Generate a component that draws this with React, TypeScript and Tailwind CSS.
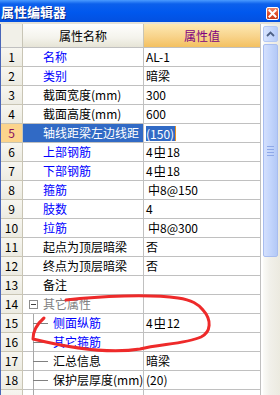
import React from "react";

type Row = {
  n: number;
  name: string;
  value?: React.ReactNode;
  blue?: boolean;
  tree?: boolean;
  group?: boolean;
  selected?: boolean;
  hideNum?: boolean;
};

const Rebar = () => (
  <span className="relative inline-block mx-[1px]">
    中
    <span className="absolute left-[1px] right-[1px] bottom-[3px] h-px bg-black" />
  </span>
);

const rows: Row[] = [
  { n: 1, name: "名称", value: "AL-1", blue: true },
  { n: 2, name: "类别", value: "暗梁", blue: true },
  { n: 3, name: "截面宽度(mm)", value: "300" },
  { n: 4, name: "截面高度(mm)", value: "600" },
  { n: 5, name: "轴线距梁左边线距", selected: true },
  { n: 6, name: "上部钢筋", value: <>4<Rebar />18</>, blue: true },
  { n: 7, name: "下部钢筋", value: <>4<Rebar />18</>, blue: true },
  { n: 8, name: "箍筋", value: <span className="pl-[2px]">中8@150</span>, blue: true },
  { n: 9, name: "肢数", value: "4", blue: true },
  { n: 10, name: "拉筋", value: <span className="pl-[2px]">中8@300</span>, blue: true },
  { n: 11, name: "起点为顶层暗梁", value: "否" },
  { n: 12, name: "终点为顶层暗梁", value: "否" },
  { n: 13, name: "备注", value: "" },
  { n: 14, name: "其它属性", group: true },
  { n: 15, name: "侧面纵筋", value: <>4<Rebar />12</>, blue: true, tree: true },
  { n: 16, name: "其它箍筋", value: "", blue: true, tree: true },
  { n: 17, name: "汇总信息", value: "暗梁", tree: true },
  { n: 18, name: "保护层厚度(mm)", value: "(20)", tree: true },
  { n: 19, name: "", value: "", tree: true, hideNum: true },
];

export default function App() {
  return (
    <div
      className="relative w-[280px] h-[395px] overflow-hidden bg-white flex flex-col text-[12px] text-black"
      style={{ fontFamily: '"Noto Sans CJK SC", "Noto Sans", sans-serif' }}
    >
      {/* title bar */}
      <div className="h-[22px] shrink-0 flex items-center justify-between bg-[linear-gradient(180deg,#4a9bff_0%,#0c60ec_18%,#0058ee_55%,#0350e0_100%)]">
        <span className="pl-[1px] text-white font-bold text-[13px] leading-none [text-shadow:1px_1px_0_#0a2a8a]">
          属性编辑器
        </span>
        <div className="mr-[1px] mt-[4px] w-[13px] h-[13px] rounded-[2px] border border-white bg-[linear-gradient(180deg,#f08a6a_0%,#e0502c_50%,#c83a1a_100%)] flex items-center justify-center">
          <svg width="9" height="9" viewBox="0 0 9 9">
            <path d="M1.5 1.5 L7.5 7.5 M7.5 1.5 L1.5 7.5" stroke="white" strokeWidth="2" strokeLinecap="square" />
          </svg>
        </div>
      </div>
      <div className="h-[2px] shrink-0 bg-[#e4e2d8]" />

      <div className="flex flex-1 min-h-0">
        {/* left frame line */}
        <div className="w-px bg-[#4a66b8] shrink-0" />

        {/* table */}
        <div className="w-[260px] shrink-0 flex flex-col border-r border-[#c0c0c0]">
          {/* header */}
          <div className="h-[24px] shrink-0 grid grid-cols-[22px_121px_116px] border-b border-[#c0c0c0]">
            <div className="bg-[#f1f0e8] border-r border-[#c8c5b6]" />
            <div className="flex items-center justify-center border-r border-[#c8c5b6] bg-[linear-gradient(180deg,#fefefd_0%,#f4f3ec_60%,#e6e4d6_100%)]">
              属性名称
            </div>
            <div className="flex items-center justify-center text-[#800080] bg-[linear-gradient(180deg,#fde9b4_0%,#f8d38a_55%,#f3c060_100%)]">
              属性值
            </div>
          </div>

          {rows.map((r) => (
            <div key={r.n} className="h-[19px] shrink-0 grid grid-cols-[22px_121px_116px]">
              <div
                className={
                  "flex items-center justify-center border-b border-r border-[#c9c5b4] " +
                  (r.selected
                    ? "bg-[#fcd48c] text-[#8a1060]"
                    : "bg-[linear-gradient(180deg,#f7f6f0_0%,#ecebe2_100%)]")
                }
              >
                {r.hideNum ? "" : r.n}
              </div>
              <div
                className={
                  "relative flex items-center border-b border-r border-[#c0c0c0] whitespace-nowrap " +
                  (r.selected ? "bg-[#316ac5] text-white pl-[20px]" : "pl-[20px]") +
                  (r.blue ? " text-[#0000ff]" : "") +
                  (r.group ? " text-[#808080]" : "")
                }
              >
                {r.group && (
                  <span className="absolute left-[6px] top-[5px] w-[9px] h-[9px] border border-[#8c8c8c] bg-white flex items-center justify-center">
                    <span className="w-[5px] h-px bg-[#404040]" />
                  </span>
                )}
                {r.tree && (
                  <>
                    <span className="absolute left-[10px] top-0 bottom-[-1px] w-px bg-[#a8a8a8]" />
                    <span className="absolute left-[10px] top-[9px] w-[15px] h-px bg-[#808080]" />
                  </>
                )}
                <span className={r.tree ? "pl-[10px]" : ""}>{r.name}</span>
              </div>
              <div className="flex items-center border-b border-[#c0c0c0] pl-[2px] whitespace-nowrap overflow-hidden">
                {r.selected ? (
                  <>
                    <span className="bg-[#316ac5] text-white pr-[1px] leading-[15px]">(150)</span>
                    <span className="w-px h-[15px] bg-[#e89020]" />
                  </>
                ) : (
                  r.value
                )}
              </div>
            </div>
          ))}
        </div>

        <div className="w-[2px] shrink-0 bg-white" />

        {/* scrollbar */}
        <div className="flex-1 flex flex-col items-start bg-[linear-gradient(90deg,#fbfbf8_0%,#f1f0ea_40%,#eceae0_100%)]">
          <div className="mt-[2px] w-[15px] h-[16px] rounded-[2px] border border-[#b4c8f4] bg-[linear-gradient(90deg,#d8e4fe_0%,#c4d6fc_60%,#b6cbf8_100%)] flex items-center justify-center">
            <svg width="9" height="6" viewBox="0 0 9 6">
              <path d="M1 5 L4.5 1.5 L8 5" stroke="#4d6185" strokeWidth="1.8" fill="none" />
            </svg>
          </div>
          <div className="mt-[2px] w-[15px] h-[213px] rounded-[2px] border border-[#a8bdf0] bg-[linear-gradient(90deg,#d4e0fd_0%,#c3d5fc_50%,#b4c9f6_100%)] flex flex-col items-center justify-center gap-[2px]">
            <span className="w-[7px] h-px bg-[#8ea8e8]" />
            <span className="w-[7px] h-px bg-[#8ea8e8]" />
            <span className="w-[7px] h-px bg-[#8ea8e8]" />
            <span className="w-[7px] h-px bg-[#8ea8e8]" />
          </div>
        </div>
      </div>

      {/* red hand-drawn annotation */}
      <svg className="absolute left-0 top-0 pointer-events-none" width="280" height="395" viewBox="0 0 280 395">
        <path
          d="M66 300 C 100 296, 150 294, 178 298 C 192 300, 198 304, 203 310 C 212 320, 211 332, 201 337 C 185 344, 160 344, 140 349 C 110 354, 70 348, 33 339 C 33 332, 37 324, 44 318"
          stroke="#ee2a2a"
          strokeWidth="3"
          fill="none"
          strokeLinecap="round"
          strokeLinejoin="round"
        />
      </svg>
    </div>
  );
}
